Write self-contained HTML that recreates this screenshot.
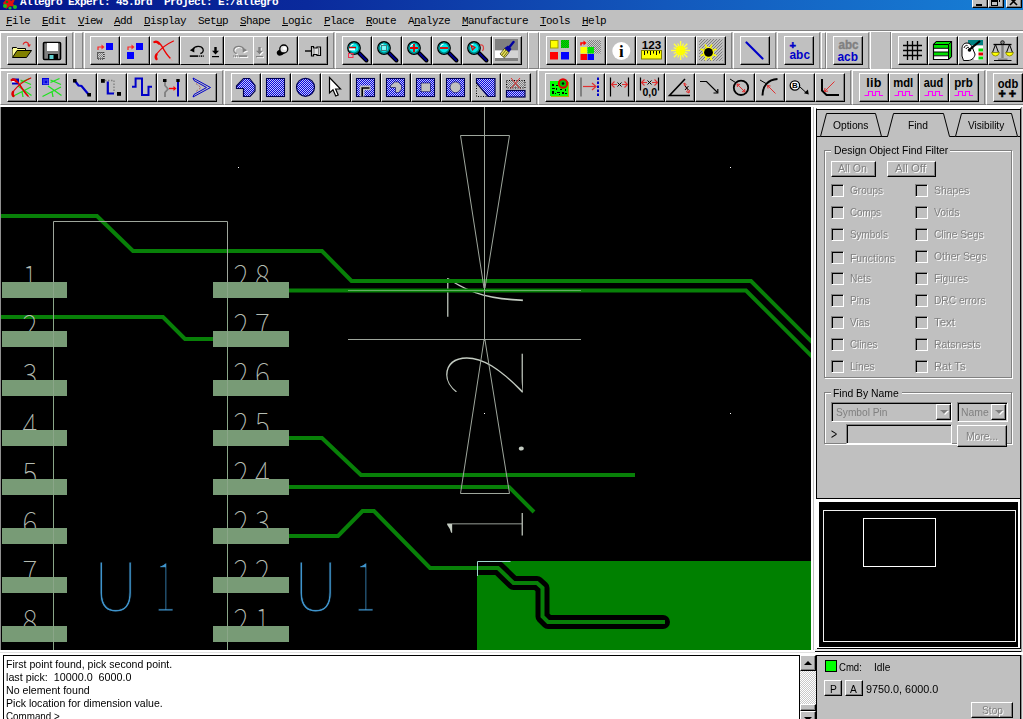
<!DOCTYPE html>
<html lang="en">
<head>
<meta charset="utf-8">
<title>Allegro Expert: 45.brd  Project: E:/allegro</title>
<style>
html,body{margin:0;padding:0;}
body{width:1023px;height:719px;position:relative;overflow:hidden;background:#c0c0c0;font-family:"Liberation Sans",sans-serif;font-size:11px;color:#000;}
.a{position:absolute;}
.a *{box-sizing:border-box;}
div{box-sizing:border-box;}
#title{left:0;top:0;width:1023px;height:10px;background:linear-gradient(to right,#03158c 0%,#0a2a9c 30%,#1358bc 65%,#1780d6 100%);overflow:hidden;}
#title .t{position:absolute;left:20px;top:-4px;font:bold 11px/12px "Liberation Mono",monospace;letter-spacing:-0.6px;color:#fff;white-space:pre;}
.wb{position:absolute;top:-6px;height:14px;width:16px;background:#c0c0c0;border:1px solid;border-color:#fff #000 #000 #fff;box-shadow:inset -1px -1px 0 #808080;}
#menu{left:0;top:10px;width:1023px;height:20px;background:#c0c0c0;}
#menu span{position:absolute;top:5px;font:11px/12px "Liberation Mono",monospace;letter-spacing:-0.6px;white-space:pre;color:#000;}
#menu u{text-decoration:underline;text-underline-offset:1px;text-decoration-thickness:1px;}
.hl{position:absolute;height:1px;left:0;width:1023px;}
.tb{position:absolute;height:37px;background:#c0c0c0;border:1px solid;border-color:#fff #808080 #808080 #fff;}
.grip{position:absolute;background:#c0c0c0;border:1px solid;border-color:#fff #808080 #808080 #fff;}
.b{position:absolute;width:30px;height:29px;background:#c0c0c0;border:1px solid;border-color:#fff #000 #000 #fff;box-shadow:inset -1px -1px 0 #808080;}
.b svg{position:absolute;left:-1px;top:-1px;width:30px;height:29px;overflow:visible;}
.b text{font-family:"Liberation Sans",sans-serif;font-weight:bold;}
</style>
</head>
<body>
<div id="title" class="a"><svg class="a" style="left:2px;top:-6px" width="16" height="16" viewBox="0 0 16 16"><path d="M1 9l5-6 3 4 5-4-3 7 4 3-7-1-4 3z" fill="#e01010"/><circle cx="3" cy="12" r="2" fill="#20c020"/><circle cx="13" cy="13" r="2" fill="#20c020"/><circle cx="8" cy="14" r="1.6" fill="#20c020"/><circle cx="5" cy="8" r="1.3" fill="#108010"/></svg><span class="t">Allegro Expert: 45.brd  Project: E:/allegro</span><div class="wb" style="left:972px"><i class="a" style="left:3px;top:9px;width:6px;height:2px;background:#000"></i></div><div class="wb" style="left:988px"><i class="a" style="left:2px;top:5px;width:7px;height:6px;border:1px solid #000;border-top-width:2px"></i><i class="a" style="left:5px;top:3px;width:6px;height:4px;border:1px solid #000;border-top-width:2px;border-left:0;border-bottom:0"></i></div><div class="wb" style="left:1006px"><svg class="a" style="left:0;top:0" width="14" height="13" viewBox="0 0 14 13"><path d="M3 3l7 7M10 3l-7 7" stroke="#000" stroke-width="1.600" fill="none"/></svg></div></div>
<div id="menu" class="a"><span style="left:6px"><u>F</u>ile</span><span style="left:42px"><u>E</u>dit</span><span style="left:78px"><u>V</u>iew</span><span style="left:114px"><u>A</u>dd</span><span style="left:144px"><u>D</u>isplay</span><span style="left:198px">Set<u>u</u>p</span><span style="left:240px"><u>S</u>hape</span><span style="left:282px"><u>L</u>ogic</span><span style="left:324px"><u>P</u>lace</span><span style="left:366px"><u>R</u>oute</span><span style="left:408px">A<u>n</u>alyze</span><span style="left:462px"><u>M</u>anufacture</span><span style="left:540px"><u>T</u>ools</span><span style="left:582px"><u>H</u>elp</span></div>
<div class="hl" style="top:30px;background:#808080"></div>
<div class="hl" style="top:31px;background:#fff"></div>
<div class="hl" style="top:68px;background:#808080"></div>
<div class="hl" style="top:69px;background:#fff"></div>
<div class="hl" style="top:104px;background:#808080"></div>
<div class="hl" style="top:105px;background:#fff;height:2px"></div>
<div class="tb" style="left:0px;top:32px;width:73px"></div>
<div class="tb" style="left:84px;top:32px;width:250px"></div>
<div class="tb" style="left:335px;top:32px;width:193px"></div>
<div class="tb" style="left:539px;top:32px;width:193px"></div>
<div class="tb" style="left:733px;top:32px;width:43px"></div>
<div class="tb" style="left:777px;top:32px;width:43px"></div>
<div class="tb" style="left:826px;top:32px;width:43px"></div>
<div class="tb" style="left:891px;top:32px;width:140px"></div>
<div class="grip" style="left:74px;top:32px;width:9px;height:37px"></div>
<div class="grip" style="left:528px;top:32px;width:11px;height:37px"></div>
<div class="grip" style="left:821px;top:32px;width:5px;height:37px"></div>
<div class="a" style="left:870px;top:32px;width:21px;height:37px;background:#c0c0c0;border-left:1px solid #fff;border-right:1px solid #808080"></div>
<div class="tb" style="left:0px;top:70px;width:223px;height:35px"></div>
<div class="tb" style="left:224px;top:70px;width:313px;height:35px"></div>
<div class="tb" style="left:538px;top:70px;width:313px;height:35px"></div>
<div class="tb" style="left:852px;top:70px;width:133px;height:35px"></div>
<div class="tb" style="left:986px;top:70px;width:45px;height:35px"></div>
<div class="b" style="left:7px;top:36px;width:30px"><svg viewBox="0 0 30 29"><defs><pattern id="pb" width="2" height="2" patternUnits="userSpaceOnUse"><rect width="2" height="2" fill="#0808d8"/><rect width="1" height="1" fill="#c4c4ff"/><rect x="1" y="1" width="1" height="1" fill="#c4c4ff"/></pattern><pattern id="pg" width="2" height="2" patternUnits="userSpaceOnUse"><rect width="2" height="2" fill="#808080"/><rect width="1" height="1" fill="#d0d0d0"/><rect x="1" y="1" width="1" height="1" fill="#d0d0d0"/></pattern><pattern id="pk" width="2" height="2" patternUnits="userSpaceOnUse"><rect width="2" height="2" fill="#c0c0c0"/><rect width="1" height="1" fill="#000"/><rect x="1" y="1" width="1" height="1" fill="#000"/></pattern><pattern id="pgr" width="2" height="2" patternUnits="userSpaceOnUse"><rect width="2" height="2" fill="#00e400"/><rect width="1" height="1" fill="#00a000"/><rect x="1" y="1" width="1" height="1" fill="#00a000"/></pattern><pattern id="ph" width="3" height="3" patternUnits="userSpaceOnUse"><rect width="3" height="3" fill="#c0c0c0"/><path d="M-1 1L1 -1M0 3L3 0M2 4L4 2" stroke="#808080" stroke-width="1"/></pattern></defs><path d="M5.5 21V11.500H9.5L10.500 12.500H18.500V14.500" fill="#ffff99" stroke="#000" stroke-width="1"/><path d="M5.5 13H18V21H5.5Z" fill="#ffff99"/><path d="M5.5 21.5L10 14.500H24.500L19.500 21.500Z" fill="#808000" stroke="#000" stroke-width="1"/><path d="M16 8.5C17.500 5 21 5.500 22 9" fill="none" stroke="#e02020" stroke-width="1.2"/><path d="M20 8.5H24L22 11.200Z" fill="#e02020"/></svg></div>
<div class="b" style="left:37px;top:36px;width:30px"><svg viewBox="0 0 30 29"><path d="M6.5 7.500Q6.500 6.500 7.500 6.500H22.500Q23.500 6.500 23.500 7.500V22.500Q23.500 23.500 22.500 23.500H7.500Q6.500 23.500 6.500 22.500Z" fill="#808080" stroke="#000" stroke-width="1.6"/><rect x="10" y="7" width="11" height="8" fill="#fff"/><rect x="11" y="18" width="10" height="5" fill="#000"/><rect x="12.500" y="19" width="4" height="4" fill="#60d0d0"/></svg></div>
<div class="b" style="left:90px;top:36px;width:30px"><svg viewBox="0 0 30 29"><path d="M8 14V11H12" fill="none" stroke="#ff2020" stroke-width="1.2"/><path d="M11.5 8.500L14.5 11L11.5 13.500Z" fill="#ff2020"/><rect x="16" y="7" width="7" height="7" fill="#0000ff"/><rect x="7.500" y="16.500" width="6.500" height="6.500" fill="url(#pg)" stroke="#000" stroke-width="1" stroke-dasharray="1 1"/></svg></div>
<div class="b" style="left:120px;top:36px;width:30px"><svg viewBox="0 0 30 29"><path d="M8 14V11H12" fill="none" stroke="#ff2020" stroke-width="1.2"/><path d="M11.5 8.500L14.5 11L11.5 13.500Z" fill="#ff2020"/><rect x="16" y="7" width="7" height="7" fill="#0000ff"/><rect x="7" y="16" width="7" height="7" fill="#0000ff"/></svg></div>
<div class="b" style="left:150px;top:36px;width:30px"><svg viewBox="0 0 30 29"><path d="M4.5 6C8 5.500 10 7 12 10.500C14.500 15 17 19 20 22" fill="none" stroke="#ee0000" stroke-width="1.5" stroke-linecap="round"/><path d="M4.500 6Q7 5 9 7.500" fill="none" stroke="#ee0000" stroke-width="2.4" stroke-linecap="round"/><path d="M20 22L22.500 25" fill="none" stroke="#f08080" stroke-width="1" stroke-dasharray="1 1"/><path d="M23.5 5C18 7.500 10.500 13 7 17.500C5.500 20 5.500 22 6.500 23" fill="none" stroke="#ee0000" stroke-width="1.2" stroke-linecap="round"/><path d="M6.500 18.500Q5 21 6.500 23" fill="none" stroke="#ee0000" stroke-width="2.4" stroke-linecap="round"/></svg></div>
<div class="b" style="left:180px;top:36px;width:30px;border-right-color:#c0c0c0;box-shadow:none"><svg viewBox="0 0 30 29"><path d="M13 13.500C14.500 9.500 21.500 9.300 23 13C24 15.500 22 17.500 20.300 17.500" fill="none" stroke="#000" stroke-width="1.300"/><path d="M9.800 14.200L14.300 11.200V16.500Z" fill="#000"/><rect x="9.800" y="19.300" width="8.500" height="1.600" fill="#000"/><rect x="19.300" y="19.300" width="1" height="1.600" fill="#000"/><rect x="21" y="19.300" width="1" height="1.600" fill="#000"/><rect x="22.700" y="19.300" width="1" height="1.600" fill="#000"/></svg></div>
<div class="b" style="left:209px;top:36px;width:15px"><svg viewBox="0 0 30 29"><path d="M5.300 11H7.700V14.800H10L6.500 18.500L3 14.800H5.300Z" fill="#000"/><rect x="3" y="20" width="7" height="1.200" fill="#000"/></svg></div>
<div class="b" style="left:224px;top:36px;width:30px;border-right-color:#c0c0c0;box-shadow:none"><svg viewBox="0 0 30 29"><g transform="translate(1 1)"><path d="M20 13.500C18.500 9.500 11.500 9.300 10 13C9 15.500 11 17.500 12.700 17.500" fill="none" stroke="#fff" stroke-width="1.300"/><path d="M23.200 14.200L18.700 11.200V16.500Z" fill="#fff"/><rect x="14.700" y="19.300" width="8.500" height="1.600" fill="#fff"/><rect x="12.700" y="19.300" width="1" height="1.600" fill="#fff"/><rect x="11" y="19.300" width="1" height="1.600" fill="#fff"/><rect x="9.300" y="19.300" width="1" height="1.600" fill="#fff"/></g><path d="M20 13.500C18.500 9.500 11.500 9.300 10 13C9 15.500 11 17.500 12.700 17.500" fill="none" stroke="#808080" stroke-width="1.300"/><path d="M23.200 14.200L18.700 11.200V16.500Z" fill="#808080"/><rect x="14.700" y="19.300" width="8.500" height="1.600" fill="#808080"/><rect x="12.700" y="19.300" width="1" height="1.600" fill="#808080"/><rect x="11" y="19.300" width="1" height="1.600" fill="#808080"/><rect x="9.300" y="19.300" width="1" height="1.600" fill="#808080"/></svg></div>
<div class="b" style="left:253px;top:36px;width:15px"><svg viewBox="0 0 30 29"><g transform="translate(1 1)"><path d="M5.300 11H7.700V14.800H10L6.500 18.500L3 14.800H5.300Z" fill="#fff"/><rect x="3" y="20" width="7" height="1.200" fill="#fff"/></g><path d="M5.300 11H7.700V14.800H10L6.500 18.500L3 14.800H5.300Z" fill="#808080"/><rect x="3" y="20" width="7" height="1.200" fill="#808080"/></svg></div>
<div class="b" style="left:268px;top:36px;width:30px"><svg viewBox="0 0 30 29"><ellipse cx="13" cy="16.200" rx="4.4" ry="3" fill="#000" transform="rotate(-25 13 16.200)"/><circle cx="15.800" cy="13" r="4" fill="#e0e0e0" stroke="#000" stroke-width="1.3"/><circle cx="16.600" cy="12.200" r="1.800" fill="#fff"/></svg></div>
<div class="b" style="left:298px;top:36px;width:30px"><svg viewBox="0 0 30 29"><path d="M7 15H14" stroke="#000" stroke-width="1.4"/><path d="M13.500 10.500H15.500V12H19V11H22.500V19.500H19V18.500H15.500V20H13.500Z" fill="#e0e0e0" stroke="#000" stroke-width="1.2"/><path d="M16 13V18M20.500 12V19" stroke="#808080" stroke-width="1"/></svg></div>
<div class="b" style="left:342px;top:36px;width:30px"><svg viewBox="0 0 30 29"><path d="M17 17L24.5 24.5" stroke="#000" stroke-width="4" stroke-linecap="round"/><path d="M17.5 17.5L24.3 24.3" stroke="#000090" stroke-width="1.800" stroke-linecap="round"/><circle cx="12" cy="12" r="6.2" fill="#00e8e8" stroke="#000" stroke-width="1.4"/><circle cx="12" cy="12" r="5" fill="none" stroke="#008080" stroke-width="1.2"/><path d="M8.5 10.5A4 4 0 0 1 11.5 8" stroke="#fff" stroke-width="1.2" fill="none"/><rect x="6.500" y="17.500" width="4.500" height="4" fill="none" stroke="#f03050" stroke-width="1"/><rect x="7" y="10.800" width="7" height="1.600" fill="#d00000"/><rect x="7" y="12.400" width="6" height="2" fill="#fff"/></svg></div>
<div class="b" style="left:372px;top:36px;width:30px"><svg viewBox="0 0 30 29"><path d="M17 17L24.5 24.5" stroke="#000" stroke-width="4" stroke-linecap="round"/><path d="M17.5 17.5L24.3 24.3" stroke="#000090" stroke-width="1.800" stroke-linecap="round"/><circle cx="12" cy="12" r="6.2" fill="#00e8e8" stroke="#000" stroke-width="1.4"/><circle cx="12" cy="12" r="5" fill="none" stroke="#008080" stroke-width="1.2"/><path d="M8.5 10.5A4 4 0 0 1 11.5 8" stroke="#fff" stroke-width="1.2" fill="none"/><rect x="9.500" y="9.500" width="5" height="5" fill="#80ffff" stroke="#408080" stroke-width="1.1"/></svg></div>
<div class="b" style="left:402px;top:36px;width:30px"><svg viewBox="0 0 30 29"><path d="M17 17L24.5 24.5" stroke="#000" stroke-width="4" stroke-linecap="round"/><path d="M17.5 17.5L24.3 24.3" stroke="#000090" stroke-width="1.800" stroke-linecap="round"/><circle cx="12" cy="12" r="6.2" fill="#00e8e8" stroke="#000" stroke-width="1.4"/><circle cx="12" cy="12" r="5" fill="none" stroke="#008080" stroke-width="1.2"/><path d="M8.5 10.5A4 4 0 0 1 11.5 8" stroke="#fff" stroke-width="1.2" fill="none"/><path d="M8 12H16M12 8V16" stroke="#e00000" stroke-width="1.8"/></svg></div>
<div class="b" style="left:432px;top:36px;width:30px"><svg viewBox="0 0 30 29"><path d="M17 17L24.5 24.5" stroke="#000" stroke-width="4" stroke-linecap="round"/><path d="M17.5 17.5L24.3 24.3" stroke="#000090" stroke-width="1.800" stroke-linecap="round"/><circle cx="12" cy="12" r="6.2" fill="#00e8e8" stroke="#000" stroke-width="1.4"/><circle cx="12" cy="12" r="5" fill="none" stroke="#008080" stroke-width="1.2"/><path d="M8.5 10.5A4 4 0 0 1 11.5 8" stroke="#fff" stroke-width="1.2" fill="none"/><path d="M8 12H16" stroke="#e00000" stroke-width="1.8"/></svg></div>
<div class="b" style="left:462px;top:36px;width:30px"><svg viewBox="0 0 30 29"><path d="M17 17L24.5 24.5" stroke="#000" stroke-width="4" stroke-linecap="round"/><path d="M17.5 17.5L24.3 24.3" stroke="#000090" stroke-width="1.800" stroke-linecap="round"/><circle cx="12" cy="12" r="6.2" fill="#00e8e8" stroke="#000" stroke-width="1.4"/><circle cx="12" cy="12" r="5" fill="none" stroke="#008080" stroke-width="1.2"/><path d="M8.5 10.5A4 4 0 0 1 11.5 8" stroke="#fff" stroke-width="1.2" fill="none"/><path d="M9 9.500L13 11.500L10.500 14Z" fill="none" stroke="#e00000" stroke-width="1.2"/><path d="M18 9C21.500 8 22.500 12 20.500 15" fill="none" stroke="#e04040" stroke-width="1.2"/></svg></div>
<div class="b" style="left:492px;top:36px;width:30px"><svg viewBox="0 0 30 29"><rect x="3" y="3" width="23" height="11.500" fill="#808080"/><rect x="3" y="14.500" width="11.500" height="7.500" fill="#fff"/><rect x="14.500" y="14.500" width="11.500" height="7.500" fill="#d4d4d4"/><rect x="3" y="22" width="23" height="3" fill="#808080"/><path d="M21.500 6L17.500 11" stroke="#0000a0" stroke-width="2.4" stroke-linecap="round"/><path d="M12.500 12L16 9.500L19.500 13L17 16.500Z" fill="#0000a0"/><path d="M8 18L12.500 12.500L17 16.500L12.500 22Z" fill="#e8e060" stroke="#000" stroke-width="0.6"/><path d="M9.500 19.500L14 14M11.500 21L15.500 15.500" stroke="#606000" stroke-width="0.9"/></svg></div>
<div class="b" style="left:546px;top:36px;width:30px"><svg viewBox="0 0 30 29"><rect x="4.500" y="4.500" width="7.500" height="7.500" fill="#ffff00" stroke="#a0a000" stroke-width="1"/><rect x="15" y="4" width="8" height="8" fill="url(#pgr)"/><rect x="4" y="16" width="8" height="7.500" fill="#ff0000"/><rect x="15" y="16" width="8" height="7.500" fill="#0000ff"/></svg></div>
<div class="b" style="left:576px;top:36px;width:30px"><svg viewBox="0 0 30 29"><path d="M5 9.500V7H8" fill="none" stroke="#ff0000" stroke-width="1.5"/><path d="M7.500 4.500L10.500 7L7.500 9.500Z" fill="#ff0000"/><rect x="11.500" y="4" width="13.500" height="13.500" fill="url(#pg)"/><rect x="4.500" y="11" width="6.500" height="6.500" fill="#ffff00"/><rect x="11.500" y="11" width="6.500" height="6.500" fill="#00e000"/><rect x="4.500" y="18" width="6.500" height="6" fill="#ff0000"/><rect x="11.500" y="18" width="6.500" height="6" fill="#0000ff"/></svg></div>
<div class="b" style="left:606px;top:36px;width:30px"><svg viewBox="0 0 30 29"><circle cx="15.300" cy="15" r="9" fill="#fff"/><text x="15.300" y="21" text-anchor="middle" font-size="17" style="font-family:'Liberation Serif',serif;font-weight:bold" fill="#000">i</text></svg></div>
<div class="b" style="left:636px;top:36px;width:30px"><svg viewBox="0 0 30 29"><text x="15.500" y="12.800" text-anchor="middle" font-size="10.500" textLength="19.500" lengthAdjust="spacingAndGlyphs" fill="#000">123</text><rect x="5.500" y="14.500" width="20" height="8.500" fill="#ffff00" stroke="#808000" stroke-width="1"/><path d="M8.500 15V19M11.500 15V17.500M14.500 15V19M17.500 15V17.500M20.500 15V19M23.500 15V17.500" stroke="#000" stroke-width="1"/></svg></div>
<div class="b" style="left:666px;top:36px;width:30px"><svg viewBox="0 0 30 29"><path d="M14.6 14.5L24.1 14.5" stroke="#ffff40" stroke-width="1.4"/><path d="M14.6 14.5L21.3 21.2" stroke="#ffff40" stroke-width="1.4"/><path d="M14.6 14.5L14.6 24.0" stroke="#ffff40" stroke-width="1.4"/><path d="M14.6 14.5L7.9 21.2" stroke="#ffff40" stroke-width="1.4"/><path d="M14.6 14.5L5.1 14.5" stroke="#ffff40" stroke-width="1.4"/><path d="M14.6 14.5L7.9 7.8" stroke="#ffff40" stroke-width="1.4"/><path d="M14.6 14.5L14.6 5.0" stroke="#ffff40" stroke-width="1.4"/><path d="M14.6 14.5L21.3 7.8" stroke="#ffff40" stroke-width="1.4"/><path d="M14.6 14.5L21.5 17.4" stroke="#ffff40" stroke-width="1.2"/><path d="M14.6 14.5L17.5 21.4" stroke="#ffff40" stroke-width="1.2"/><path d="M14.6 14.5L11.7 21.4" stroke="#ffff40" stroke-width="1.2"/><path d="M14.6 14.5L7.7 17.4" stroke="#ffff40" stroke-width="1.2"/><path d="M14.6 14.5L7.7 11.6" stroke="#ffff40" stroke-width="1.2"/><path d="M14.6 14.5L11.7 7.6" stroke="#ffff40" stroke-width="1.2"/><path d="M14.6 14.5L17.5 7.6" stroke="#ffff40" stroke-width="1.2"/><path d="M14.6 14.5L21.5 11.6" stroke="#ffff40" stroke-width="1.2"/><circle cx="14.600" cy="14.500" r="4.800" fill="#ffff00"/></svg></div>
<div class="b" style="left:696px;top:36px;width:30px"><svg viewBox="0 0 30 29"><rect x="3" y="3" width="23.500" height="22" fill="url(#ph)"/><path d="M12.5 16.4L20.4 19.7" stroke="#ffff00" stroke-width="1.6"/><path d="M12.5 16.4L15.8 24.3" stroke="#ffff00" stroke-width="1.6"/><path d="M12.5 16.4L9.2 24.3" stroke="#ffff00" stroke-width="1.6"/><path d="M12.5 16.4L4.6 19.7" stroke="#ffff00" stroke-width="1.6"/><path d="M12.5 16.4L4.6 13.1" stroke="#ffff00" stroke-width="1.6"/><path d="M12.5 16.4L9.2 8.5" stroke="#ffff00" stroke-width="1.6"/><path d="M12.5 16.4L15.8 8.5" stroke="#ffff00" stroke-width="1.6"/><path d="M12.5 16.4L20.4 13.1" stroke="#ffff00" stroke-width="1.6"/><circle cx="12.500" cy="16.400" r="5.500" fill="#ffff00"/><circle cx="12.500" cy="16.400" r="4.400" fill="#000"/></svg></div>
<div class="b" style="left:740px;top:36px;width:30px"><svg viewBox="0 0 30 29"><path d="M6.500 6.500L22.500 22.500" stroke="#0000c8" stroke-width="2.2" stroke-linecap="round"/></svg></div>
<div class="b" style="left:784px;top:36px;width:30px"><svg viewBox="0 0 30 29"><text x="8.800" y="12.800" text-anchor="middle" font-size="11" fill="#0000c8" stroke="#0000c8" stroke-width="0.5">+</text><text x="5.500" y="22.600" font-size="13.500" textLength="20.500" lengthAdjust="spacingAndGlyphs" fill="#0000c8">abc</text></svg></div>
<div class="b" style="left:833px;top:36px;width:30px"><svg viewBox="0 0 30 29"><text x="5.500" y="13.400" font-size="13" textLength="20" lengthAdjust="spacingAndGlyphs" fill="#808080" stroke="#808080" stroke-width="0.4">abc</text><text x="4.500" y="24.800" font-size="13" textLength="20.500" lengthAdjust="spacingAndGlyphs" fill="#0000c8">acb</text></svg></div>
<div class="b" style="left:898px;top:36px;width:30px"><svg viewBox="0 0 30 29"><path d="M5 9.500H24M5 14.500H24M5 19.500H24M9.500 5V24M14.500 5V24M19.500 5V24" stroke="#000" stroke-width="1.300"/></svg></div>
<div class="b" style="left:928px;top:36px;width:30px"><svg viewBox="0 0 30 29"><path d="M5.500 8.500L8.500 5.500H23.500V20.500L20.500 23.500H5.500Z" fill="#fff" stroke="#000" stroke-width="1.2"/><path d="M5.500 8.500L8.500 5.500H23.500L20.500 8.500Z" fill="#00e000" stroke="#000" stroke-width="1"/><path d="M20.500 8.500L23.500 5.500V20.500L20.500 23.500Z" fill="#00c000" stroke="#000" stroke-width="1"/><rect x="6" y="9" width="14" height="3" fill="#00e000"/><rect x="6" y="16" width="14" height="3.500" fill="#00e000"/><path d="M5.500 12.300H20.500M5.500 16H20.500M5.500 19.800H20.500" stroke="#000" stroke-width="1"/></svg></div>
<div class="b" style="left:958px;top:36px;width:30px"><svg viewBox="0 0 30 29"><rect x="3" y="3" width="22" height="22" fill="#c0c0c0"/><rect x="10" y="4" width="15" height="5" fill="#008080"/><rect x="16" y="10" width="9" height="14" fill="#fff"/><rect x="20.500" y="12.500" width="4.500" height="3" fill="#00e000"/><rect x="20.500" y="16.500" width="4.500" height="3" fill="#e00000"/><rect x="20.500" y="20.500" width="4.500" height="3" fill="#00e000"/><path d="M4 13C4 9 6 7 9 7C12 7 13 9 14 11L17 18C17 21 14 24.500 10 24.500H5.500L4 20Z" fill="#fff" stroke="#000" stroke-width="1"/><path d="M6 12C6.500 10 8 9 9.500 9.500M8 13C8.500 11.500 10 11 11 11.500" fill="none" stroke="#000" stroke-width="1"/><path d="M11 14L22 5" stroke="#000" stroke-width="2.200"/><circle cx="11.500" cy="14" r="1.800" fill="#000"/></svg></div>
<div class="b" style="left:988px;top:36px;width:30px"><svg viewBox="0 0 30 29"><path d="M14.500 7V22" stroke="#808080" stroke-width="2.400"/><path d="M10 23.500H19.500" stroke="#808080" stroke-width="2"/><path d="M6 24.500H23.500" stroke="#000" stroke-width="1"/><path d="M5.500 8.500H23.500" stroke="#000" stroke-width="1.300"/><circle cx="14.500" cy="6.500" r="1.800" fill="#808080" stroke="#000" stroke-width="0.8"/><path d="M7.500 8.500L4.500 16.500M7.500 8.500L10.500 16.500M21.500 8.500L18.500 16.500M21.500 8.500L24.500 16.500" stroke="#000" stroke-width="1"/><path d="M3.500 16.500H11.500Q10.500 20 7.500 20Q4.500 20 3.500 16.500Z" fill="#ffff00" stroke="#808000" stroke-width="0.8"/><path d="M17.500 16.500H25.500Q24.500 20 21.500 20Q18.500 20 17.500 16.500Z" fill="#ffff00" stroke="#808000" stroke-width="0.8"/></svg></div>
<div class="b" style="left:7px;top:73px;width:30px"><svg viewBox="0 0 30 29"><path d="M5.5 23.5L24 14M11 13L24.500 22.500M15 18.500L16 24M13.500 9.500L22.500 5.500M13.500 7L24 11.500" fill="none" stroke="#20e020" stroke-width="1.300"/><rect x="5" y="5.500" width="7" height="6" fill="#0000c0"/><rect x="5" y="8" width="5" height="1.500" fill="#fff"/><path d="M4.500 7C8 6 10 8 12.500 11.500C15 15.500 18 20 21 23" fill="none" stroke="#e00000" stroke-width="1.500" stroke-linecap="round"/><path d="M4.800 7Q7 5.500 9.500 8.500" fill="none" stroke="#e00000" stroke-width="2.400" stroke-linecap="round"/><path d="M21 23L22.800 25" fill="none" stroke="#a04040" stroke-width="1" stroke-dasharray="1 1"/><path d="M23.800 5C18 7.500 10.500 13 7 17.500C5.500 20 5 22 6.500 23" fill="none" stroke="#e00000" stroke-width="1.200" stroke-linecap="round"/><path d="M6 19Q4.800 21.500 6.500 23" fill="none" stroke="#e00000" stroke-width="2.400" stroke-linecap="round"/></svg></div>
<div class="b" style="left:37px;top:73px;width:30px"><svg viewBox="0 0 30 29"><path d="M5.5 23.5L24 14M11 13L24.500 22.500M15 18.500L16 24M13.500 9.500L22.500 5.500M13.500 7L24 11.500" fill="none" stroke="#20e020" stroke-width="1.300"/><rect x="5" y="5" width="7" height="7" fill="#0000e0"/><path d="M6.500 6.500h1v1h-1zM8.500 6.500h1v1h-1zM10.300 6.500h1v1h-1zM6.500 8.500h1v1h-1zM10.300 8.500h1v1h-1zM6.500 10.300h1v1h-1zM8.500 10.300h1v1h-1zM10.300 10.300h1v1h-1z" fill="#c0c0ff"/></svg></div>
<div class="b" style="left:67px;top:73px;width:30px"><svg viewBox="0 0 30 29"><path d="M8 8L11.500 12.500L14.500 13L22 22" fill="none" stroke="#0000c8" stroke-width="2.200"/><rect x="6" y="6" width="3.500" height="3.500" fill="#000"/><rect x="20.300" y="20" width="3.700" height="3.500" fill="#000"/></svg></div>
<div class="b" style="left:97px;top:73px;width:30px"><svg viewBox="0 0 30 29"><path d="M8 7.500H17V20" fill="none" stroke="#808080" stroke-width="1.400" stroke-dasharray="1.500 1.500"/><path d="M10.800 8.500V20.500H17" fill="none" stroke="#0000c8" stroke-width="2.200"/><rect x="4" y="6" width="3.800" height="3.800" fill="#000"/><rect x="20" y="19" width="4" height="3.800" fill="#000"/></svg></div>
<div class="b" style="left:127px;top:73px;width:30px"><svg viewBox="0 0 30 29"><path d="M5 13.800H8.600V5.600H15V22H21.500V13.800H25" fill="none" stroke="#0000c8" stroke-width="2"/></svg></div>
<div class="b" style="left:157px;top:73px;width:30px"><svg viewBox="0 0 30 29"><path d="M8 9V12.500L11 16L8 19.500V24" fill="none" stroke="#808080" stroke-width="1.800"/><rect x="6" y="6" width="3.500" height="3" fill="#000"/><path d="M12 15.500H18" stroke="#ff0000" stroke-width="1.400"/><path d="M16.500 13L19.500 15.500L16.500 18Z" fill="#ff0000"/><path d="M21 8.500V23.500" stroke="#0000c8" stroke-width="2"/><rect x="19.300" y="6" width="3.400" height="3" fill="#000"/></svg></div>
<div class="b" style="left:187px;top:73px;width:30px"><svg viewBox="0 0 30 29"><path d="M6 5L23.500 14.500L6 24L7 21.500L19.500 14.500L7 7.500Z" fill="none" stroke="#0000c8" stroke-width="1"/><path d="M9 10.500L14 14.500L9 18.500" fill="none" stroke="#a06060" stroke-width="1" stroke-dasharray="2 1.500"/></svg></div>
<div class="b" style="left:231px;top:73px;width:30px"><svg viewBox="0 0 30 29"><path d="M5.500 13L12.500 5.500H18.500L24 12.500V18L19 23.500H12.500V15.500H5.500Z" fill="url(#pb)" stroke="#000050" stroke-width="1.200"/></svg></div>
<div class="b" style="left:261px;top:73px;width:30px"><svg viewBox="0 0 30 29"><rect x="5.500" y="5.500" width="18" height="18" fill="url(#pb)" stroke="#000050" stroke-width="1.1"/></svg></div>
<div class="b" style="left:291px;top:73px;width:30px"><svg viewBox="0 0 30 29"><circle cx="14.500" cy="14.300" r="9" fill="url(#pb)" stroke="#000050" stroke-width="1.200"/></svg></div>
<div class="b" style="left:321px;top:73px;width:30px"><svg viewBox="0 0 30 29"><path d="M8.500 4.500V20L12 16.800L14.700 23L17.200 22L14.600 16H19.500Z" fill="#fff" stroke="#000" stroke-width="1.200" stroke-linejoin="miter"/></svg></div>
<div class="b" style="left:351px;top:73px;width:30px"><svg viewBox="0 0 30 29"><rect x="5.500" y="5.500" width="18" height="18" fill="url(#pb)" stroke="#000050" stroke-width="1.1"/><path d="M8.800 23.500V12.500H19.500V17.200H13.500V23.500Z" fill="#c0c0c0"/><path d="M11.200 23.500V15H18.500" fill="none" stroke="#000" stroke-width="1.600"/></svg></div>
<div class="b" style="left:381px;top:73px;width:30px"><svg viewBox="0 0 30 29"><rect x="5.500" y="5.500" width="18" height="18" fill="url(#pb)" stroke="#000050" stroke-width="1.1"/><path d="M9.500 12.500L13.500 9H17.500L20.500 12.500V16L17.500 19.500H14.500V14.500H9.500Z" fill="#c0c0c0" stroke="#000050" stroke-width="0.6"/></svg></div>
<div class="b" style="left:411px;top:73px;width:30px"><svg viewBox="0 0 30 29"><rect x="5.500" y="5.500" width="18" height="18" fill="url(#pb)" stroke="#000050" stroke-width="1.1"/><rect x="10" y="10" width="9.300" height="8.800" fill="#c0c0c0" stroke="#000050" stroke-width="0.6"/></svg></div>
<div class="b" style="left:441px;top:73px;width:30px"><svg viewBox="0 0 30 29"><rect x="5.500" y="5.500" width="18" height="18" fill="url(#pb)" stroke="#000050" stroke-width="1.1"/><circle cx="14.500" cy="14.300" r="5.400" fill="#c0c0c0" stroke="#000050" stroke-width="0.6"/></svg></div>
<div class="b" style="left:471px;top:73px;width:30px"><svg viewBox="0 0 30 29"><path d="M5.500 5.500H24V23.500H17L5.500 10Z" fill="url(#pb)" stroke="#000050" stroke-width="1.200"/><path d="M5.500 10V23.500H17" fill="none" stroke="#000" stroke-width="1" stroke-dasharray="1 1.500"/></svg></div>
<div class="b" style="left:501px;top:73px;width:30px"><svg viewBox="0 0 30 29"><rect x="5.500" y="7.500" width="18.500" height="7.500" fill="url(#pg)" stroke="#000" stroke-width="1" stroke-dasharray="1 1.500"/><path d="M10 5L19 15.500M19 5L10 15.500" stroke="#e03030" stroke-width="1"/><rect x="5.500" y="17.500" width="18.500" height="6.500" fill="url(#pb)" stroke="#000050" stroke-width="1.200"/></svg></div>
<div class="b" style="left:545px;top:73px;width:30px"><svg viewBox="0 0 30 29"><rect x="6" y="9" width="18" height="15" fill="#b0b000"/><rect x="5" y="8" width="18" height="15" fill="#00ff00"/><path d="M7 11h2v2h-2zM7 15h3v1h-3zM7 18h2v3h-2zM11 12h2v1h-2zM11 15h1v2h-1zM12 19h3v1h-3zM15 16h2v1h-2zM17 19h2v2h-2zM20 16h1v2h-1zM14 21h1v1h-1zM10 20h1v1h-1zM20 20h2v1h-2z" fill="#000"/><circle cx="18" cy="10.500" r="4.200" fill="#00c000" stroke="#e00000" stroke-width="2"/><circle cx="18" cy="10.500" r="1.300" fill="#000"/></svg></div>
<div class="b" style="left:575px;top:73px;width:30px"><svg viewBox="0 0 30 29"><path d="M6 4.500V23.500" stroke="#808080" stroke-width="2"/><path d="M8 13.500H20" stroke="#e03030" stroke-width="1.200"/><path d="M17 10L21 13.500L17 17" fill="none" stroke="#e03030" stroke-width="1.200"/><path d="M23 4.500V23.500" stroke="#0000c8" stroke-width="2" stroke-dasharray="2.500 1.500"/></svg></div>
<div class="b" style="left:605px;top:73px;width:30px"><svg viewBox="0 0 30 29"><path d="M5.500 4.500V23.500M23.500 4.500V23.500" stroke="#000" stroke-width="1.200"/><path d="M6.500 11.500H12M17 11.500H22.500M9.500 8.500L6.500 11.500L9.500 14.500M19.500 8.500L22.500 11.500L19.500 14.500" fill="none" stroke="#e03030" stroke-width="1.100"/><path d="M12.500 9.500L16.500 13.500M16.500 9.500L12.500 13.500" stroke="#000" stroke-width="1"/></svg></div>
<div class="b" style="left:635px;top:73px;width:30px"><svg viewBox="0 0 30 29"><path d="M5.500 4.500V17.500M23.500 4.500V17.500" stroke="#000" stroke-width="1.200"/><path d="M6.500 9.500H12M17 9.500H22.500M9.500 6.500L6.500 9.500L9.500 12.500M19.500 6.500L22.500 9.500L19.500 12.500" fill="none" stroke="#e03030" stroke-width="1.100"/><path d="M12.500 7.500L16.500 11.500M16.500 7.500L12.500 11.500" stroke="#000" stroke-width="1"/><text x="14.700" y="22.500" text-anchor="middle" font-size="10.500" fill="#000">0,0</text></svg></div>
<div class="b" style="left:665px;top:73px;width:30px"><svg viewBox="0 0 30 29"><path d="M20 6L4.500 22.500H25" fill="none" stroke="#000" stroke-width="1.600" stroke-linejoin="miter"/><path d="M19 10L24 20M19 10L19.500 13M19 10L21.500 11.500M24 20L21 18.500M24 20L24.500 17" fill="none" stroke="#e03030" stroke-width="1"/><path d="M20 13L23.500 17M23.500 13L20 17" stroke="#000" stroke-width="1"/></svg></div>
<div class="b" style="left:695px;top:73px;width:30px"><svg viewBox="0 0 30 29"><path d="M5 8.500H11.500L22.500 19.500" fill="none" stroke="#000" stroke-width="1.200"/><path d="M22.800 16V20H18.500" fill="none" stroke="#000" stroke-width="1.200"/></svg></div>
<div class="b" style="left:725px;top:73px;width:30px"><svg viewBox="0 0 30 29"><path d="M5 6L10.500 9.500" stroke="#000" stroke-width="1"/><circle cx="16" cy="14.800" r="7.200" fill="none" stroke="#000" stroke-width="1.800"/><path d="M12 11L20 19M12 11L12.500 14M12 11L15 11.500M20 19L17 18.500M20 19L19.500 16" fill="none" stroke="#e03030" stroke-width="1"/></svg></div>
<div class="b" style="left:755px;top:73px;width:30px"><svg viewBox="0 0 30 29"><path d="M5 7L11 10.500" stroke="#000" stroke-width="1"/><path d="M7.500 22.500C7.500 13 13 6.500 22.500 6" fill="none" stroke="#000" stroke-width="2"/><path d="M20.500 20.500L12.500 12.500M12.500 12.500L13 15.500M12.500 12.500L15.500 13" fill="none" stroke="#e03030" stroke-width="1"/></svg></div>
<div class="b" style="left:785px;top:73px;width:30px"><svg viewBox="0 0 30 29"><path d="M14.500 13.500L21 19.500" stroke="#000" stroke-width="1"/><path d="M23.800 21.400L19 20.300L22.900 16.600Z" fill="#000"/><circle cx="9.900" cy="12.500" r="4.700" fill="#fff" stroke="#000" stroke-width="1.300"/><text x="9.900" y="15.400" text-anchor="middle" font-size="8" fill="#000">B</text></svg></div>
<div class="b" style="left:815px;top:73px;width:30px"><svg viewBox="0 0 30 29"><path d="M7 6V17.500L11.500 22H24" fill="none" stroke="#000" stroke-width="2"/><path d="M19.500 8.500L9.500 18.500M9.500 18.500L10 15M9.500 18.500L13 18" fill="none" stroke="#e03030" stroke-width="1"/></svg></div>
<div class="b" style="left:859px;top:73px;width:30px"><svg viewBox="0 0 30 29"><text x="15" y="14" text-anchor="middle" font-size="12.5" fill="#000" letter-spacing="0.3">lib</text><path d="M5.5 22.5H9.5V18.5H13.5V22.5H16.5V18.5H20.5V22.5H24" fill="none" stroke="#ff00ff" stroke-width="1.1"/></svg></div>
<div class="b" style="left:889px;top:73px;width:30px"><svg viewBox="0 0 30 29"><text x="14.200" y="14" text-anchor="middle" font-size="12.500" textLength="20" lengthAdjust="spacingAndGlyphs" fill="#000">mdl</text><path d="M5.5 22.5H9.5V18.5H13.5V22.5H16.5V18.5H20.5V22.5H24" fill="none" stroke="#ff00ff" stroke-width="1.1"/></svg></div>
<div class="b" style="left:919px;top:73px;width:30px"><svg viewBox="0 0 30 29"><text x="14.500" y="14" text-anchor="middle" font-size="12.500" textLength="19.500" lengthAdjust="spacingAndGlyphs" fill="#000">aud</text><path d="M5.5 22.5H9.5V18.5H13.5V22.5H16.5V18.5H20.5V22.5H24" fill="none" stroke="#ff00ff" stroke-width="1.1"/></svg></div>
<div class="b" style="left:949px;top:73px;width:30px"><svg viewBox="0 0 30 29"><text x="14.500" y="14" text-anchor="middle" font-size="12.500" textLength="18.500" lengthAdjust="spacingAndGlyphs" fill="#000">prb</text><path d="M5.5 22.5H9.5V18.5H13.5V22.5H16.5V18.5H20.5V22.5H24" fill="none" stroke="#ff00ff" stroke-width="1.1"/></svg></div>
<div class="b" style="left:993px;top:73px;width:30px"><svg viewBox="0 0 30 29"><text x="15" y="14.500" text-anchor="middle" font-size="13" textLength="20.500" lengthAdjust="spacingAndGlyphs" fill="#000">odb</text><text x="5.500" y="25.300" font-size="12.500" textLength="17.500" lengthAdjust="spacing" fill="#000" stroke="#000" stroke-width="0.6">++</text></svg></div>
<svg class="a" style="left:0;top:0" width="1023" height="719" viewBox="0 0 1023 719">
<defs><clipPath id="cv"><rect x="1" y="107" width="810" height="543"/></clipPath></defs>
<rect x="0" y="107" width="1" height="543" fill="#909090"/>
<rect x="1" y="107" width="810" height="543" fill="#000"/>
<g clip-path="url(#cv)">
<text transform="translate(523.6 542.5) rotate(-90) scale(0.898 1)" style="font-family:'Noto Sans CJK SC','DejaVu Sans','Liberation Sans',sans-serif;font-weight:100;font-size:107px" fill="#c4ccc2" stroke="#000" stroke-width="2.3"><tspan x="0" textLength="38.7" lengthAdjust="spacingAndGlyphs">1</tspan><tspan x="94.8" style="font-size:84px">.</tspan><tspan x="160.8">2</tspan><tspan x="244.9">7</tspan></text>
<rect x="477" y="561" width="340" height="95" fill="#008000"/>
<path d="M470 568H498L513.5 583H537L542.5 588V616.5L548 622H663" fill="none" stroke="#000" stroke-width="14" stroke-linejoin="round" stroke-linecap="round"/>
<path d="M0 216H97L133 251H322L351.5 281H751L815 345" fill="none" stroke="#088008" stroke-width="4" stroke-linejoin="miter"/>
<path d="M289 290.5H746L815 359.5" fill="none" stroke="#088008" stroke-width="4" stroke-linejoin="miter"/>
<path d="M0 317H163L185 339H214" fill="none" stroke="#088008" stroke-width="4" stroke-linejoin="miter"/>
<path d="M289 438H322L361 475H635" fill="none" stroke="#088008" stroke-width="4" stroke-linejoin="miter"/>
<path d="M289 487H509L534 512" fill="none" stroke="#088008" stroke-width="4" stroke-linejoin="miter"/>
<path d="M289 536H338L362.5 511H374L430 568H498L513.5 583H537L542.5 588V616.5L548 622H665" fill="none" stroke="#088008" stroke-width="4" stroke-linejoin="miter"/>
<g fill="none" stroke="#9ea69c" stroke-width="1">
<path d="M53.5 650V221.5H227.5V650"/>
<path d="M484.5 107V341"/>
<path d="M460.5 135.5H509.5L485 288M460.5 135.5L484 288"/>
<path d="M460.5 493.5H509.5L485 340M460.5 493.5L484 340"/>
<path d="M348 339.5H581"/>
<path d="M348 290.5H581" stroke="#62ae62"/>
</g>
<path d="M477.5 576V561.5H510.5" fill="none" stroke="#9fd8d0" stroke-width="1"/>
<text transform="translate(0 288.5) scale(0.86 1)" text-anchor="middle" style="font-family:'Noto Sans CJK SC','DejaVu Sans','Liberation Sans',sans-serif;font-weight:100;font-size:33px" fill="#b4bcb2"><tspan x="34.9">1</tspan></text>
<text transform="translate(0 288.5) scale(0.86 1)" text-anchor="middle" style="font-family:'Noto Sans CJK SC','DejaVu Sans','Liberation Sans',sans-serif;font-weight:100;font-size:33px" fill="#b4bcb2"><tspan x="280.2">2</tspan><tspan x="305.2">8</tspan></text>
<text transform="translate(0 337.5) scale(0.86 1)" text-anchor="middle" style="font-family:'Noto Sans CJK SC','DejaVu Sans','Liberation Sans',sans-serif;font-weight:100;font-size:33px" fill="#b4bcb2"><tspan x="34.9">2</tspan></text>
<text transform="translate(0 337.5) scale(0.86 1)" text-anchor="middle" style="font-family:'Noto Sans CJK SC','DejaVu Sans','Liberation Sans',sans-serif;font-weight:100;font-size:33px" fill="#b4bcb2"><tspan x="280.2">2</tspan><tspan x="305.2">7</tspan></text>
<text transform="translate(0 386.5) scale(0.86 1)" text-anchor="middle" style="font-family:'Noto Sans CJK SC','DejaVu Sans','Liberation Sans',sans-serif;font-weight:100;font-size:33px" fill="#b4bcb2"><tspan x="34.9">3</tspan></text>
<text transform="translate(0 386.5) scale(0.86 1)" text-anchor="middle" style="font-family:'Noto Sans CJK SC','DejaVu Sans','Liberation Sans',sans-serif;font-weight:100;font-size:33px" fill="#b4bcb2"><tspan x="280.2">2</tspan><tspan x="305.2">6</tspan></text>
<text transform="translate(0 436.5) scale(0.86 1)" text-anchor="middle" style="font-family:'Noto Sans CJK SC','DejaVu Sans','Liberation Sans',sans-serif;font-weight:100;font-size:33px" fill="#b4bcb2"><tspan x="34.9">4</tspan></text>
<text transform="translate(0 436.5) scale(0.86 1)" text-anchor="middle" style="font-family:'Noto Sans CJK SC','DejaVu Sans','Liberation Sans',sans-serif;font-weight:100;font-size:33px" fill="#b4bcb2"><tspan x="280.2">2</tspan><tspan x="305.2">5</tspan></text>
<text transform="translate(0 485.5) scale(0.86 1)" text-anchor="middle" style="font-family:'Noto Sans CJK SC','DejaVu Sans','Liberation Sans',sans-serif;font-weight:100;font-size:33px" fill="#b4bcb2"><tspan x="34.9">5</tspan></text>
<text transform="translate(0 485.5) scale(0.86 1)" text-anchor="middle" style="font-family:'Noto Sans CJK SC','DejaVu Sans','Liberation Sans',sans-serif;font-weight:100;font-size:33px" fill="#b4bcb2"><tspan x="280.2">2</tspan><tspan x="305.2">4</tspan></text>
<text transform="translate(0 534.5) scale(0.86 1)" text-anchor="middle" style="font-family:'Noto Sans CJK SC','DejaVu Sans','Liberation Sans',sans-serif;font-weight:100;font-size:33px" fill="#b4bcb2"><tspan x="34.9">6</tspan></text>
<text transform="translate(0 534.5) scale(0.86 1)" text-anchor="middle" style="font-family:'Noto Sans CJK SC','DejaVu Sans','Liberation Sans',sans-serif;font-weight:100;font-size:33px" fill="#b4bcb2"><tspan x="280.2">2</tspan><tspan x="305.2">3</tspan></text>
<text transform="translate(0 583.5) scale(0.86 1)" text-anchor="middle" style="font-family:'Noto Sans CJK SC','DejaVu Sans','Liberation Sans',sans-serif;font-weight:100;font-size:33px" fill="#b4bcb2"><tspan x="34.9">7</tspan></text>
<text transform="translate(0 583.5) scale(0.86 1)" text-anchor="middle" style="font-family:'Noto Sans CJK SC','DejaVu Sans','Liberation Sans',sans-serif;font-weight:100;font-size:33px" fill="#b4bcb2"><tspan x="280.2">2</tspan><tspan x="305.2">2</tspan></text>
<text transform="translate(0 632.5) scale(0.86 1)" text-anchor="middle" style="font-family:'Noto Sans CJK SC','DejaVu Sans','Liberation Sans',sans-serif;font-weight:100;font-size:33px" fill="#b4bcb2"><tspan x="34.9">8</tspan></text>
<text transform="translate(0 632.5) scale(0.86 1)" text-anchor="middle" style="font-family:'Noto Sans CJK SC','DejaVu Sans','Liberation Sans',sans-serif;font-weight:100;font-size:33px" fill="#b4bcb2"><tspan x="280.2">2</tspan><tspan x="305.2">1</tspan></text>
<rect x="2" y="282" width="65" height="16" fill="#789b76"/>
<rect x="213" y="282" width="76" height="16" fill="#789b76"/>
<rect x="2" y="331" width="65" height="16" fill="#789b76"/>
<rect x="213" y="331" width="76" height="16" fill="#789b76"/>
<rect x="2" y="380" width="65" height="16" fill="#789b76"/>
<rect x="213" y="380" width="76" height="16" fill="#789b76"/>
<rect x="2" y="430" width="65" height="16" fill="#789b76"/>
<rect x="213" y="430" width="76" height="16" fill="#789b76"/>
<rect x="2" y="479" width="65" height="16" fill="#789b76"/>
<rect x="213" y="479" width="76" height="16" fill="#789b76"/>
<rect x="2" y="528" width="65" height="16" fill="#789b76"/>
<rect x="213" y="528" width="76" height="16" fill="#789b76"/>
<rect x="2" y="577" width="65" height="16" fill="#789b76"/>
<rect x="213" y="577" width="76" height="16" fill="#789b76"/>
<rect x="2" y="626" width="65" height="16" fill="#789b76"/>
<rect x="213" y="626" width="76" height="16" fill="#789b76"/>
<path d="M53.5 282V650M227.5 282V650" stroke="#8aa688" stroke-width="1" fill="none"/>
<text transform="translate(93.0 611) scale(0.96 1)" style="font-family:'Noto Sans CJK SC','DejaVu Sans','Liberation Sans',sans-serif;font-weight:100;font-size:68px" fill="#3f94cc" stroke="#000" stroke-width="0.9">U<tspan x="64" textLength="22.1" lengthAdjust="spacingAndGlyphs">1</tspan></text>
<text transform="translate(293.0 611) scale(0.96 1)" style="font-family:'Noto Sans CJK SC','DejaVu Sans','Liberation Sans',sans-serif;font-weight:100;font-size:68px" fill="#3f94cc" stroke="#000" stroke-width="0.9">U<tspan x="64" textLength="22.1" lengthAdjust="spacingAndGlyphs">1</tspan></text>
<rect x="238" y="167" width="1" height="1" fill="#fff"/>
<rect x="730" y="167" width="1" height="1" fill="#fff"/>
<rect x="484" y="413" width="1" height="1" fill="#fff"/>
<rect x="730" y="413" width="1" height="1" fill="#fff"/>
</g>
</svg>
<style>
.sunk{position:absolute;border:1px solid;border-color:#808080 #fff #fff #808080;}
.pt{position:absolute;white-space:pre;font:11px/13px "Liberation Sans",sans-serif;color:#000;transform-origin:0 0;transform:scaleX(0.955);}
.dis{color:#808080;text-shadow:1px 1px 0 #fff;}
.dis2{color:#808080;}
.gb{position:absolute;border:1px solid #808080;box-shadow:1px 1px 0 #fff, inset 1px 1px 0 #fff;}
.gl{position:absolute;background:#c0c0c0;white-space:pre;font:11px/13px "Liberation Sans",sans-serif;padding:0 2px 0 2px;}
.cb{position:absolute;width:13px;height:13px;background:#c0c0c0;border:1px solid;border-color:#808080 #fff #fff #808080;box-shadow:inset 1px 1px 0 #000,inset -1px -1px 0 #c0c0c0;}
.pb{position:absolute;background:#c0c0c0;border:1px solid;border-color:#fff #000 #000 #fff;box-shadow:inset -1px -1px 0 #808080;text-align:center;font:11px/13px "Liberation Sans",sans-serif;white-space:pre;}
.combo{position:absolute;background:#c0c0c0;border:1px solid;border-color:#808080 #fff #fff #808080;box-shadow:inset 1px 1px 0 #000,inset -1px -1px 0 #c0c0c0;}
.dd{position:absolute;width:15px;height:16px;background:#c0c0c0;border:1px solid;border-color:#fff #000 #000 #fff;box-shadow:inset -1px -1px 0 #808080;}
.dd:after{content:"";position:absolute;left:3px;top:5px;border:4px solid transparent;border-top:4px solid #808080;border-bottom:0;filter:drop-shadow(1px 1px 0 #fff);}
</style>
<div class="a" style="left:811px;top:107px;width:2px;height:545px;background:#fff"></div>
<div class="a" style="left:813px;top:107px;width:1px;height:545px;background:#c0c0c0"></div>
<div class="a" style="left:814px;top:107px;width:2px;height:545px;background:#fff"></div>
<div class="a" style="left:816px;top:108px;width:205px;height:391px;background:#c0c0c0;border:1px solid #000;border-top-color:#fff;border-right-color:#000"></div>
<div class="a" style="left:816px;top:109px;width:205px;height:1px;background:#000"></div><div class="a" style="left:814px;top:107px;width:209px;height:1px;background:#fff"></div>
<svg class="a" style="left:816px;top:108px" width="207" height="32" viewBox="816 108 207 32"><path d="M817 136.5H820.5L826.5 113.5H875.5L881.5 136.5H887.5L893.5 113.5H943.5L949.5 136.5" fill="none" stroke="#000" stroke-width="1"/><path d="M881.5 136.5H887.5M949.5 136.5H955.5L961.5 113.5H1011.5L1017.5 136.5H1020" fill="none" stroke="#000" stroke-width="1"/><path d="M820.5 136.5H881.5M955.5 136.5H1017" fill="none" stroke="#000" stroke-width="1"/></svg>
<span class="pt " style="left:833px;top:119px;transform:scaleX(0.936)">Options</span>
<span class="pt " style="left:908px;top:119px;transform:scaleX(0.934)">Find</span>
<span class="pt " style="left:968px;top:119px;transform:scaleX(0.916)">Visibility</span>
<div class="gb" style="left:824px;top:150px;width:188px;height:228px"></div>
<div class="gl" style="left:831px;top:144px;width:119px;height:13px"></div>
<span class="pt " style="left:833.5px;top:144px;transform:scaleX(0.944)">Design Object Find Filter</span>
<div class="pb" style="left:831px;top:161px;width:45px;height:16px"></div>
<span class="pt dis" style="left:838px;top:162px;transform:scaleX(0.968)">All On</span>
<div class="pb" style="left:887px;top:161px;width:49px;height:16px"></div>
<span class="pt dis" style="left:895px;top:162px;transform:scaleX(1.041)">All Off</span>
<div class="cb" style="left:831px;top:184px"></div>
<div class="cb" style="left:915px;top:184px"></div>
<span class="pt dis" style="left:850px;top:184px;transform:scaleX(0.915)">Groups</span>
<span class="pt dis" style="left:933.5px;top:184px;transform:scaleX(0.946)">Shapes</span>
<div class="cb" style="left:831px;top:206px"></div>
<div class="cb" style="left:915px;top:206px"></div>
<span class="pt dis" style="left:850px;top:206px;transform:scaleX(0.890)">Comps</span>
<span class="pt dis" style="left:933.5px;top:206px;transform:scaleX(0.943)">Voids</span>
<div class="cb" style="left:831px;top:228px"></div>
<div class="cb" style="left:915px;top:228px"></div>
<span class="pt dis" style="left:850px;top:228px;transform:scaleX(0.901)">Symbols</span>
<span class="pt dis" style="left:933.5px;top:228px;transform:scaleX(0.932)">Cline Segs</span>
<div class="cb" style="left:831px;top:251px"></div>
<div class="cb" style="left:915px;top:250px"></div>
<span class="pt dis" style="left:850px;top:251.5px;transform:scaleX(0.943)">Functions</span>
<span class="pt dis" style="left:933.5px;top:250px;transform:scaleX(0.945)">Other Segs</span>
<div class="cb" style="left:831px;top:272px"></div>
<div class="cb" style="left:915px;top:272px"></div>
<span class="pt dis" style="left:850px;top:272px;transform:scaleX(0.928)">Nets</span>
<span class="pt dis" style="left:933.5px;top:272px;transform:scaleX(0.927)">Figures</span>
<div class="cb" style="left:831px;top:294px"></div>
<div class="cb" style="left:915px;top:294px"></div>
<span class="pt dis" style="left:850px;top:294px;transform:scaleX(0.911)">Pins</span>
<span class="pt dis" style="left:933.5px;top:294px;transform:scaleX(0.926)">DRC errors</span>
<div class="cb" style="left:831px;top:316px"></div>
<div class="cb" style="left:915px;top:316px"></div>
<span class="pt dis" style="left:850px;top:316px;transform:scaleX(0.920)">Vias</span>
<span class="pt dis" style="left:933.5px;top:316px;transform:scaleX(1.040)">Text</span>
<div class="cb" style="left:831px;top:338px"></div>
<div class="cb" style="left:915px;top:338px"></div>
<span class="pt dis" style="left:850px;top:338px;transform:scaleX(0.893)">Clines</span>
<span class="pt dis" style="left:933.5px;top:338px;transform:scaleX(0.948)">Ratsnests</span>
<div class="cb" style="left:831px;top:360px"></div>
<div class="cb" style="left:915px;top:360px"></div>
<span class="pt dis" style="left:850px;top:360px;transform:scaleX(0.932)">Lines</span>
<span class="pt dis" style="left:933.5px;top:360px;transform:scaleX(1.020)">Rat Ts</span>
<div class="gb" style="left:824px;top:392px;width:188px;height:52px"></div>
<div class="gl" style="left:831px;top:386px;width:71px;height:13px"></div>
<span class="pt " style="left:833.3px;top:387px;transform:scaleX(0.943)">Find By Name</span>
<div class="combo" style="left:831px;top:402px;width:121px;height:20px"><div class="dd" style="left:104px;top:1px"></div></div>
<span class="pt dis2" style="left:835.5px;top:406px;transform:scaleX(0.926)">Symbol Pin</span>
<div class="combo" style="left:957px;top:402px;width:51px;height:20px"><div class="dd" style="left:33px;top:1px"></div></div>
<span class="pt dis2" style="left:961.3px;top:406px;transform:scaleX(0.944)">Name</span>
<span class="pt" style="left:831px;top:425px;font-size:15px;line-height:17px;transform:scaleX(0.7)">&gt;</span>
<div class="combo" style="left:846px;top:424px;width:106px;height:20px"></div>
<div class="pb" style="left:957px;top:425px;width:50px;height:22px"></div>
<span class="pt dis" style="left:965.8px;top:430px;transform:scaleX(0.941)">More...</span>
<div class="a" style="left:816px;top:499px;width:207px;height:3px;background:#fff"></div>
<div class="a" style="left:816px;top:502px;width:3px;height:150px;background:#fff"></div>
<div class="a" style="left:819px;top:502px;width:199px;height:145px;background:#000"></div>
<div class="a" style="left:1018px;top:502px;width:2px;height:148px;background:#fff"></div>
<div class="a" style="left:1020px;top:499px;width:1px;height:153px;background:#000"></div>
<div class="a" style="left:823px;top:510px;width:193px;height:132px;border:1px solid #f0f0f0"></div>
<div class="a" style="left:863px;top:518px;width:73px;height:49px;border:1px solid #fff"></div>
<div class="a" style="left:1021px;top:107px;width:1px;height:612px;background:#909090"></div>
<div class="a" style="left:1022px;top:107px;width:1px;height:612px;background:#e0e0e0"></div>
<div class="a" style="left:817px;top:647px;width:203px;height:1px;background:#fff"></div>
<div class="a" style="left:817px;top:648px;width:203px;height:1px;background:#000"></div>
<div class="a" style="left:815px;top:649px;width:206px;height:2px;background:#e8e8e8"></div>
<div class="a" style="left:815px;top:651px;width:206px;height:1px;background:#000"></div>
<div class="a" style="left:0;top:650px;width:815px;height:5px;background:#fff"></div>
<div class="a" style="left:0;top:652px;width:815px;height:1px;background:#e0e0e0"></div>
<div class="a" style="left:815px;top:652px;width:208px;height:3px;background:#fff"></div>
<div class="a" style="left:0;top:655px;width:3px;height:64px;background:#fff"></div>
<div class="a" style="left:3px;top:655px;width:797px;height:70px;background:#fff;border:1px solid #000"></div>
<span class="pt " style="left:5.6px;top:658px;transform:scaleX(0.960)">First point found, pick second point.</span>
<span class="pt " style="left:5.6px;top:671px;transform:scaleX(0.977)">last pick:  10000.0  6000.0</span>
<span class="pt " style="left:5.6px;top:684px;transform:scaleX(0.964)">No element found</span>
<span class="pt " style="left:5.6px;top:697px;transform:scaleX(0.960)">Pick location for dimension value.</span>
<span class="pt " style="left:5.6px;top:710px;transform:scaleX(0.892)">Command &gt;</span>
<div class="a" style="left:800px;top:655px;width:16px;height:70px;background:repeating-conic-gradient(#fff 0% 25%, #c8c8c8 0% 50%) 0 0/2px 2px"></div>
<div class="pb" style="left:800px;top:655px;width:16px;height:16px"><i class="a" style="left:3px;top:5px;border:4px solid transparent;border-bottom:4px solid #000;border-top:0"></i></div>
<div class="pb" style="left:800px;top:704px;width:16px;height:7px"></div>
<div class="pb" style="left:800px;top:711px;width:16px;height:16px"><i class="a" style="left:3px;top:5px;border:4px solid transparent;border-top:4px solid #000;border-bottom:0"></i></div>
<div class="a" style="left:816px;top:655px;width:205px;height:70px;background:#c0c0c0;border:1px solid #000"></div>
<div class="a" style="left:825px;top:660px;width:12px;height:12px;background:#00ff00;border:1px solid #000"></div>
<span class="pt " style="left:839px;top:661px;transform:scaleX(0.868)">Cmd:</span>
<span class="pt " style="left:873.8px;top:661px;transform:scaleX(0.924)">Idle</span>
<div class="pb" style="left:824px;top:680px;width:18px;height:16px"></div>
<span class="pt " style="left:830px;top:683px;transform:scaleX(0.935)">P</span>
<div class="pb" style="left:845px;top:680px;width:18px;height:16px"></div>
<span class="pt " style="left:850px;top:683px;transform:scaleX(0.935)">A</span>
<span class="pt " style="left:866.3px;top:683px;transform:scaleX(0.984)">9750.0, 6000.0</span>
<div class="pb" style="left:971px;top:702px;width:42px;height:16px"></div>
<span class="pt dis" style="left:982px;top:704px;transform:scaleX(0.928)">Stop</span>
</body>
</html>
